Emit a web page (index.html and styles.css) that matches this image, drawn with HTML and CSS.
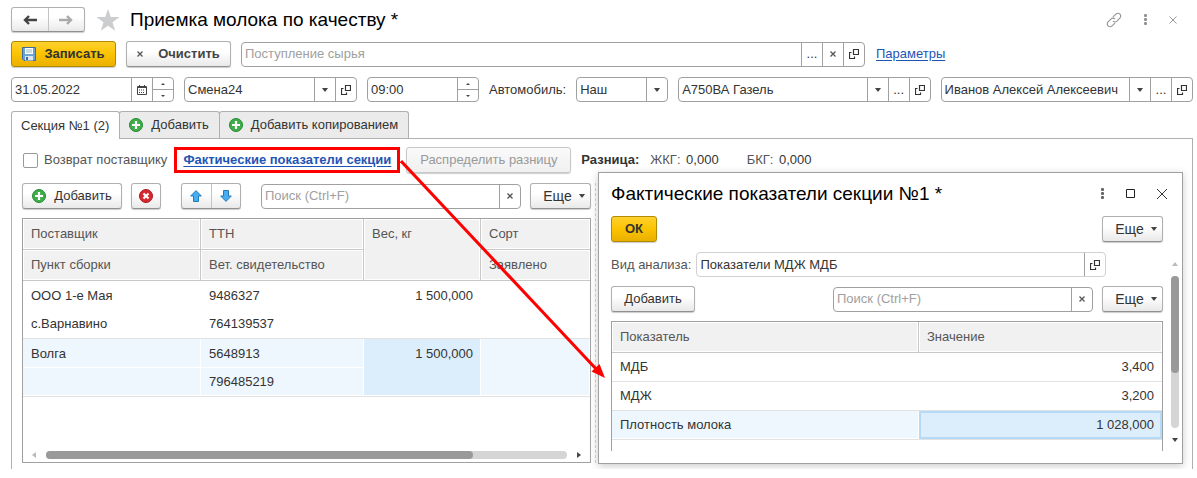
FILE: index.html
```html
<!DOCTYPE html>
<html lang="ru">
<head>
<meta charset="utf-8">
<title>Приемка молока по качеству</title>
<link rel="stylesheet" href="styles.css">
</head>
<body>
<svg class="sprite" aria-hidden="true">
  <symbol id="open" viewBox="0 0 10 10"><path d="M4.500.5h5v5h-5zM2.500 3.500h-2v6h5v-2" fill="none" stroke="#333" stroke-width="1.200"/></symbol>
  <symbol id="down" viewBox="0 0 6 4"><path d="M0 0h6L3.500 3.500h-1z" fill="#444"/></symbol>
  <symbol id="up-small" viewBox="0 0 4 2"><path d="M0 2L2 0l2 2z" fill="#444"/></symbol>
  <symbol id="down-small" viewBox="0 0 4 2"><path d="M0 0l2 2 2-2z" fill="#444"/></symbol>
  <symbol id="cross" viewBox="0 0 6 6"><path d="M.5.5l5 5M5.500.5l-5 5" stroke="#555" stroke-width="1.300"/></symbol>
  <symbol id="dots" viewBox="0 0 3 11"><g fill="#666"><rect width="3" height="3" rx="1"/><rect y="4" width="3" height="3" rx="1"/><rect y="8" width="3" height="3" rx="1"/></g></symbol>
  <symbol id="plus" viewBox="0 0 14 14"><circle cx="7" cy="7" r="6.500" fill="#3fae49" stroke="#258a35"/><path d="M7 3v8M3 7h8" stroke="#fff" stroke-width="2.200"/></symbol>
  <symbol id="arrow" viewBox="0 0 12 12"><path d="M6 .6L11.300 6H8.500v5.500h-5V6H.7z" fill="#46aef0" stroke="#2379b8" stroke-linejoin="round"/></symbol>
</svg>

<main class="page">
  <header class="titlebar">
    <div class="group nav">
      <button aria-label="Назад"><svg width="14" height="10" viewBox="0 0 14 10"><path d="M14 5H2M6 1L2 5l4 4" fill="none" stroke="#444" stroke-width="2.400"/></svg></button>
      <button aria-label="Вперед"><svg width="14" height="10" viewBox="0 0 14 10"><path d="M0 5h12M8 1l4 4-4 4" fill="none" stroke="#aaa" stroke-width="2.400"/></svg></button>
    </div>
    <svg class="star" width="24" height="22" viewBox="0 0 24 22"><path d="M12 0l2.800 8.100H23.500l-7 5.200 2.700 8.500-7.200-5.100-7.200 5.100 2.700-8.500-7-5.200h8.700z" fill="#cbcdce"/></svg>
    <h1>Приемка молока по качеству *</h1>
    <div class="window-tools">
      <button class="plain" aria-label="Ссылка"><svg width="16" height="16" viewBox="0 0 16 16"><g fill="none" stroke="#999" stroke-width="1.200" stroke-linecap="round"><path d="M7.300 4.700l2.600-2.600a2.800 2.800 0 0 1 4 4l-3 3a2.800 2.800 0 0 1-3.600.2M8.700 11.300l-2.600 2.600a2.800 2.800 0 0 1-4-4l3-3a2.800 2.800 0 0 1 3.600-.2"/></g></svg></button>
      <button class="plain pale" aria-label="Меню"><svg width="3" height="11"><use href="#dots"/></svg></button>
      <button class="plain" aria-label="Закрыть"><svg width="8" height="8" viewBox="0 0 8 8"><path d="M.5.5l7 7M7.500.5l-7 7" stroke="#999"/></svg></button>
    </div>
  </header>

  <div class="row">
    <button class="btn primary save"><svg width="14" height="14" viewBox="0 0 14 14"><path d="M.5.5h13v13H2l-1.500-1.500z" fill="#6ba3d6" stroke="#3e6d9c"/><path d="M3 1h8v6H3z" fill="#fff"/><path d="M4 3h6M4 5h6" stroke="#9bb"/><path d="M3 9h8v4.500H3z" fill="#dce6ee"/><path d="M4 10h2v3H4z" fill="#3e6d9c"/></svg>Записать</button>
    <button class="btn strong clear"><svg width="6" height="6"><use href="#cross"/></svg>Очистить</button>
    <div class="field receipt">
      <input type="text" placeholder="Поступление сырья" aria-label="Поступление сырья">
      <button aria-label="Выбрать">...</button>
      <button aria-label="Очистить"><svg width="6" height="6"><use href="#cross"/></svg></button>
      <button aria-label="Открыть"><svg width="10" height="10"><use href="#open"/></svg></button>
    </div>
    <a class="params" href="#">Параметры</a>
  </div>

  <div class="row">
    <div class="field date">
      <input type="text" value="31.05.2022" aria-label="Дата">
      <button aria-label="Календарь"><svg width="10" height="10" viewBox="0 0 10 10"><path d="M.5 1.500h9v8h-9z" fill="none" stroke="#444"/><path d="M0 2.500h10M2.500 0v2M7.500 0v2" stroke="#444"/><path d="M2 5h6M2 7.500h6" stroke="#444" stroke-dasharray="1 1" stroke-width="1.200"/></svg></button>
      <div class="spin"><button aria-label="Больше"><svg width="4" height="2"><use href="#up-small"/></svg></button><button aria-label="Меньше"><svg width="4" height="2"><use href="#down-small"/></svg></button></div>
    </div>
    <div class="field shift">
      <input type="text" value="Смена24" aria-label="Смена">
      <button aria-label="Список"><svg width="6" height="4"><use href="#down"/></svg></button>
      <button aria-label="Открыть"><svg width="10" height="10"><use href="#open"/></svg></button>
    </div>
    <div class="field time">
      <input type="text" value="09:00" aria-label="Время">
      <div class="spin"><button aria-label="Больше"><svg width="4" height="2"><use href="#up-small"/></svg></button><button aria-label="Меньше"><svg width="4" height="2"><use href="#down-small"/></svg></button></div>
    </div>
    <label class="car-label" for="owner">Автомобиль:</label>
    <div class="field owner">
      <select id="owner"><option>Наш</option></select>
      <span class="cell"><svg width="6" height="4"><use href="#down"/></svg></span>
    </div>
    <div class="field wide">
      <input type="text" value="А750ВА Газель" aria-label="Машина">
      <button aria-label="Список"><svg width="6" height="4"><use href="#down"/></svg></button>
      <button aria-label="Выбрать">...</button>
      <button aria-label="Открыть"><svg width="10" height="10"><use href="#open"/></svg></button>
    </div>
    <div class="field wide">
      <input type="text" value="Иванов Алексей Алексеевич" aria-label="Водитель">
      <button aria-label="Список"><svg width="6" height="4"><use href="#down"/></svg></button>
      <button aria-label="Выбрать">...</button>
      <button aria-label="Открыть"><svg width="10" height="10"><use href="#open"/></svg></button>
    </div>
  </div>

  <nav class="tabs">
    <button class="tab active">Секция №1 (2)</button>
    <button class="tab"><svg width="14" height="14"><use href="#plus"/></svg>Добавить</button>
    <button class="tab"><svg width="14" height="14"><use href="#plus"/></svg>Добавить копированием</button>
  </nav>

  <section class="panel">
    <div class="section-row">
      <label class="check"><input type="checkbox">Возврат поставщику</label>
      <a class="facts" href="#">Фактические показатели секции</a>
      <button class="btn spread" disabled>Распределить разницу</button>
      <div class="totals"><b>Разница:</b><span>ЖКГ: <i>0,000</i></span><span>БКГ: <i>0,000</i></span></div>
    </div>

    <div class="split">
      <div class="suppliers">
        <div class="tools">
          <button class="btn add"><svg width="14" height="14"><use href="#plus"/></svg>Добавить</button>
          <button class="btn remove" aria-label="Удалить"><svg width="14" height="14" viewBox="0 0 14 14"><circle cx="7" cy="7" r="6.500" fill="#d8282f" stroke="#ad1820"/><path d="M4.500 4.500l5 5M9.500 4.500l-5 5" stroke="#fff" stroke-width="2.200"/></svg></button>
          <div class="group move">
            <button aria-label="Вверх"><svg width="12" height="12"><use href="#arrow"/></svg></button>
            <button aria-label="Вниз"><svg class="flip" width="12" height="12"><use href="#arrow"/></svg></button>
          </div>
          <div class="field search">
            <input type="text" placeholder="Поиск (Ctrl+F)" aria-label="Поиск">
            <button aria-label="Очистить"><svg width="6" height="6"><use href="#cross"/></svg></button>
          </div>
          <button class="btn more">Еще<svg width="6" height="4"><use href="#down"/></svg></button>
        </div>
        <div class="grid-box">
          <table>
            <colgroup><col class="c1"><col class="c2"><col class="c3"><col></colgroup>
            <thead>
              <tr><th>Поставщик</th><th>ТТН</th><th rowspan="2" class="tall">Вес, кг</th><th>Сорт</th></tr>
              <tr><th>Пункт сборки</th><th>Вет. свидетельство</th><th>Заявлено</th></tr>
            </thead>
            <tbody>
              <tr><td>ООО 1-е Мая</td><td>9486327</td><td rowspan="2" class="num tall">1 500,000</td><td rowspan="2"></td></tr>
              <tr><td>с.Варнавино</td><td>764139537</td></tr>
            </tbody>
            <tbody class="selected">
              <tr><td>Волга</td><td>5648913</td><td rowspan="2" class="num tall current">1 500,000</td><td rowspan="2"></td></tr>
              <tr><td></td><td>796485219</td></tr>
            </tbody>
          </table>
          <div class="hscroll">
            <svg width="4" height="6" viewBox="0 0 4 6"><path d="M4 0v6L0 3z" fill="#bbb"/></svg>
            <div class="track"><div class="thumb"></div></div>
            <svg width="4" height="6" viewBox="0 0 4 6"><path d="M0 0v6l4-3z" fill="#444"/></svg>
          </div>
        </div>
      </div>
      <div class="splitter"></div>
    </div>
  </section>

  <section class="dialog" role="dialog" aria-labelledby="dialog-title">
    <header class="dialog-head">
      <h2 id="dialog-title">Фактические показатели секции №1 *</h2>
      <button class="plain" aria-label="Меню"><svg width="3" height="11"><use href="#dots"/></svg></button>
      <button class="plain" aria-label="Развернуть"><svg width="9" height="9" viewBox="0 0 9 9"><path d="M.5.5h8v8h-8z" fill="none" stroke="#222"/></svg></button>
      <button class="plain" aria-label="Закрыть"><svg width="10" height="10" viewBox="0 0 10 10"><path d="M0 0l10 10M10 0L0 10" stroke="#333"/></svg></button>
    </header>
    <div class="dialog-body">
      <div class="dialog-main">
        <div class="bar">
          <button class="btn primary ok">ОК</button>
          <button class="btn more">Еще<svg width="6" height="4"><use href="#down"/></svg></button>
        </div>
        <div class="analysis">
          <label for="analysis">Вид анализа:</label>
          <div class="field light">
            <input id="analysis" type="text" value="Показатели МДЖ МДБ">
            <button aria-label="Открыть"><svg width="10" height="10"><use href="#open"/></svg></button>
          </div>
        </div>
        <div class="bar">
          <button class="btn add-plain">Добавить</button>
          <div class="field search">
            <input type="text" placeholder="Поиск (Ctrl+F)" aria-label="Поиск">
            <button aria-label="Очистить"><svg width="6" height="6"><use href="#cross"/></svg></button>
          </div>
          <button class="btn more">Еще<svg width="6" height="4"><use href="#down"/></svg></button>
        </div>
        <div class="grid-box open-end">
          <table class="lined">
            <colgroup><col class="name"><col></colgroup>
            <thead><tr><th>Показатель</th><th>Значение</th></tr></thead>
            <tbody>
              <tr><td>МДБ</td><td class="num">3,400</td></tr>
              <tr><td>МДЖ</td><td class="num">3,200</td></tr>
            </tbody>
            <tbody class="selected">
              <tr><td>Плотность молока</td><td class="num current framed">1 028,000</td></tr>
            </tbody>
          </table>
        </div>
      </div>
      <div class="vscroll">
        <svg width="6" height="4" viewBox="0 0 6 4"><path d="M0 4h6L3 0z" fill="#bbb"/></svg>
        <div class="track"><div class="thumb"></div></div>
        <svg width="6" height="4" viewBox="0 0 6 4"><path d="M0 0h6L3 4z" fill="#444"/></svg>
      </div>
    </div>
  </section>

  <svg class="pointer" width="206" height="220" viewBox="0 0 206 220" aria-hidden="true"><path d="M1 1l197 210" stroke="#f00" stroke-width="3"/><path d="M205 218l-13.500-6.500 8-7.500z" fill="#f00"/></svg>
</main>
</body>
</html>
```

FILE: styles.css
```css
* { box-sizing: border-box; }

body {
  margin: 0;
  background: #fff;
  color: #333;
  font: 13px/16px "Liberation Sans", Arial, sans-serif;
}

button, input, select { font: inherit; color: inherit; margin: 0; }
button { padding: 0; }
svg { display: block; flex: none; }
h1, h2 { margin: 0; color: #000; font-size: 19px; line-height: 24px; font-weight: 400; white-space: nowrap; }
a { color: #1f55b5; text-underline-offset: 2px; }
.sprite { position: absolute; width: 0; height: 0; }

.page {
  position: relative;
  display: flex;
  flex-direction: column;
  min-height: 469px;
  padding: 7px 4px 0 11px;
}

/* Buttons */
.btn, .group {
  display: flex;
  align-items: center;
  justify-content: center;
  height: 26px;
  border: 1px solid #b0b0b0;
  border-bottom-color: #909090;
  border-radius: 3px;
  background: linear-gradient(#fff 40%, #e9e9e9);
  box-shadow: 0 1px 1px #ccc;
  white-space: nowrap;
  flex: none;
}
.group { align-items: stretch; }
.group button {
  display: flex;
  flex: 1;
  align-items: center;
  justify-content: center;
  border: 0;
  background: none;
}
.group button + button { border-left: 1px solid #c4c4c4; }
.btn.primary {
  border-color: #b08a00;
  background: linear-gradient(#ffd12f, #fbc300 50%, #eab000);
  font-weight: 700;
}
.strong { font-weight: 700; color: #444; }
.btn:disabled { color: #999; background: linear-gradient(#fafafa, #f0f0f0); border-color: #c8c8c8; }
.plain { display: flex; padding: 0; border: 0; background: none; }
.btn.more { width: 61px; gap: 7px; padding-left: 7px; font-size: 14px; }

/* Fields */
.field {
  display: flex;
  height: 25px;
  min-width: 0;
  border: 1px solid #a0a0a0;
  border-radius: 4px;
  background: #fff;
}
.field input, .field select {
  flex: 1;
  min-width: 0;
  width: 0;
  padding: 0 3px;
  border: 0;
  outline: 0;
  background: none;
  appearance: none;
}
.field input::placeholder { color: #a0a0a0; opacity: 1; }
.field > button, .cell, .spin {
  display: flex;
  flex: none;
  align-items: center;
  justify-content: center;
  width: 21px;
  border: 0;
  border-left: 1px solid #a0a0a0;
  background: none;
}
.spin { flex-direction: column; align-items: stretch; }
.spin button { display: flex; flex: 1; align-items: center; justify-content: center; border: 0; background: none; }
.spin button + button { border-top: 1px solid #a0a0a0; }
.light { border-color: #d0d0d0; }

/* Title line */
.titlebar { display: flex; align-items: center; height: 25px; }
.nav { width: 74px; height: 25px; }
.star { margin: 0 10px 0 11px; }
.window-tools { display: flex; align-items: center; gap: 22px; margin: 0 16px 0 auto; }
.pale { opacity: .7; }

.row { display: flex; align-items: center; gap: 10px; margin-top: 10px; }
.titlebar + .row { margin-top: 9px; }
.save { width: 105px; gap: 8px; }
.clear { width: 105px; gap: 15px; }
.receipt { flex: 0 1 624px; }
.params { margin-left: 1px; }
.date { flex: 0 0 163px; }
.shift { flex: 0 0 173px; }
.time { flex: 0 0 112px; }
.car-label { flex: 0 0 76px; white-space: nowrap; }
.owner { flex: 0 0 92px; }
.wide { flex: 1; }

/* Tabs */
.tabs { display: flex; margin-top: 9px; }
.tab {
  display: flex;
  align-items: center;
  gap: 8px;
  height: 27px;
  padding: 0 10px 0 9px;
  border: 1px solid #b0b0b0;
  border-bottom: 0;
  border-radius: 3px 3px 0 0;
  background: #ebebeb;
  white-space: nowrap;
}
.tab + .tab { margin-left: -1px; }
.tab.active { z-index: 1; height: 28px; margin-bottom: -1px; background: #fff; }

.panel {
  display: flex;
  flex: 1;
  flex-direction: column;
  padding: 8px 10px 6px;
  border: 1px solid #b0b0b0;
  border-bottom: 0;
}
.section-row { display: flex; align-items: center; height: 26px; white-space: nowrap; }
.check { display: flex; align-items: center; gap: 6px; color: #555; }
.check input {
  width: 15px;
  height: 15px;
  margin: 0 0 0 1px;
  border: 1px solid #999;
  border-radius: 2px;
  background: #fff;
  appearance: none;
}
.facts { margin-left: 7px; padding: 2px 6px; border: 3px solid #f00; font-weight: 700; }
.spread { width: 165px; margin-left: 6px; }
.totals { display: flex; margin-left: 10px; color: #555; }
.totals b { margin-right: 11px; color: #333; }
.totals span { margin-right: 28px; }
.totals i { margin-left: 2px; color: #333; font-style: normal; }

.split { display: flex; flex: 1; gap: 4px; margin-top: 10px; }
.suppliers { display: flex; flex-direction: column; width: 569px; }
.splitter { width: 1px; border-left: 1px dashed #c4c4c4; }
.tools { display: flex; align-items: center; margin-bottom: 9px; }
.add { width: 100px; gap: 8px; }
.remove { width: 30px; margin-left: 9px; }
.move { width: 60px; margin-left: 20px; }
.flip { transform: rotate(180deg); }
.search { width: 260px; margin-right: 9px; }
.tools .search { flex: 1; margin-left: 20px; }

/* Tables */
.grid-box { display: flex; flex: 1; flex-direction: column; border: 1px solid #a0a0a0; }
table { width: 100%; border-collapse: separate; border-spacing: 0; table-layout: fixed; }
.c1 { width: 178px; }
.c2 { width: 163px; }
.c3 { width: 117px; }
.name { width: 307px; }
th {
  height: 31px;
  padding: 0 8px;
  border-right: 1px solid #c8c8c8;
  border-bottom: 1px solid #c8c8c8;
  background: #f1f1f1;
  box-shadow: inset 0 0 0 1px #fff;
  color: #555;
  font-weight: 400;
  text-align: left;
  white-space: nowrap;
}
th:last-child { border-right: 0; }
th.tall { padding-top: 7px; vertical-align: top; }
td { height: 29px; padding: 0 8px; white-space: nowrap; }
tbody tr:last-child td, td[rowspan], .lined td { border-bottom: 1px solid #e2e2e2; }
.num { text-align: right; }
td.tall { padding-top: 7px; vertical-align: top; }
.selected td { background: #eef6fe; box-shadow: inset -1px -1px 0 #fff; }
.selected .current { background: #dceefc; }
.selected .framed { box-shadow: inset 0 0 0 2px #b4daf8; }
.open-end { border-bottom: 0; }

/* Scroll bars */
.hscroll { display: flex; align-items: center; gap: 10px; margin: auto 9px 3px; }
.track { flex: 1; border-radius: 4px; background: #d5d5d5; }
.thumb { border-radius: 4px; background: #999; }
.hscroll .thumb { width: 82%; height: 8px; }
.vscroll { display: flex; flex-direction: column; align-items: center; gap: 10px; width: 8px; padding: 46px 0 9px; }
.vscroll .track { width: 8px; }
.vscroll .thumb { height: 64%; }

/* Floating window over the form */
.dialog {
  position: absolute;
  z-index: 2;
  top: 172px;
  left: 598px;
  right: 14px;
  display: flex;
  flex-direction: column;
  height: 292px;
  padding: 8px 3px 12px 12px;
  border: 1px solid #a0a0a0;
  background: #fff;
  box-shadow: 0 2px 8px #ccc;
}
.dialog-head { display: flex; align-items: center; gap: 22px; height: 25px; padding-right: 12px; }
.dialog-head h2 { flex: 1; }
.dialog-body { display: flex; flex: 1; gap: 8px; margin-top: 10px; }
.dialog-main { display: flex; flex: 1; flex-direction: column; min-width: 0; }
.bar { display: flex; align-items: center; }
.bar > :nth-last-child(2) { margin-right: 9px; }
.bar .search, .bar .ok + .more { margin-left: auto; }
.ok { width: 46px; }
.add-plain { width: 84px; }
.analysis { display: flex; align-items: center; gap: 5px; margin: 10px 57px 9px 0; color: #555; white-space: nowrap; }
.analysis .field { flex: 1; color: #333; }
.dialog .grid-box { margin-top: 9px; }

/* Callout arrow from the link to the window */
.pointer { position: absolute; z-index: 3; top: 160px; left: 400px; pointer-events: none; }
```
